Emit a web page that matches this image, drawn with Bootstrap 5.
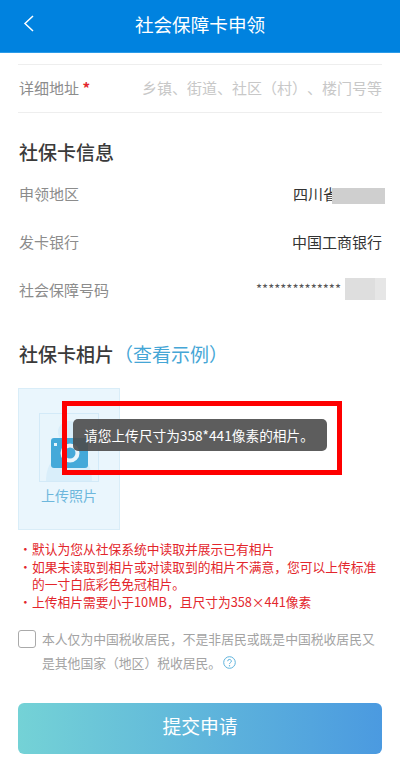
<!DOCTYPE html>
<html lang="zh-CN">
<head>
    <meta charset="UTF-8">
    <meta name="viewport" content="width=device-width, initial-scale=1.0">
    <title>社会保障卡申领</title>
    <link href="https://cdn.jsdelivr.net/npm/bootstrap@5.3.0/dist/css/bootstrap.min.css" rel="stylesheet">
    <style>
        html, body { height: 777px; overflow: hidden; }
        body { font-family: "Noto Sans CJK SC", "Liberation Sans", sans-serif; background: #fff; color: #333; position: relative; text-spacing-trim: space-all; }
        .app-head { height: 53px; background: #0082df; border-bottom: 1px solid #2b9be8; color: #fff; position: relative; }
        .app-head h1 { font-size: 18.6px; font-weight: 400; margin: 0; line-height: 47px; text-align: center; }
        .back-arrow { position: absolute; left: 23px; top: 14px; }
        .page-body { padding: 11px 18px 0; }
        .addr-row { height: 49px; border-top: 1px solid #eee; border-bottom: 1px solid #eee; font-size: 15px; }
        .field-label { color: #8c8c8c; font-size: 15px; padding-left: 1px; }
        .req-star { color: #e3262c; font-weight: 700; }
        .addr-hint { color: #c8c8c8; font-size: 15px; white-space: nowrap; }
        .sect-title { font-size: 19px; font-weight: 500; color: #3a3a3a; line-height: 26px; margin: 0; padding-left: 1px; }
        .sect-one { margin-top: 26px; margin-bottom: 18px; }
        .sect-two { margin-top: 14px; margin-bottom: 21px; }
        .sect-title span { color: #45a6d6; font-weight: 400; }
        .info-row { height: 48px; font-size: 15px; }
        .info-val { color: #333; position: relative; }
        .blur-area { position: absolute; left: 39px; top: 5px; width: 53px; height: 16px; background: #cfcfcf; }
        .blur-num { position: absolute; right: -4px; top: -1px; width: 41px; height: 22px; background: linear-gradient(90deg, #dedede 73%, #e6e6e6 73%); }
        .stars { font-size: 13px; color: #555; white-space: nowrap; }
        .photo-box { width: 102px; height: 142px; background: #eaf6fd; border: 1px solid #d9edf8; }
        .photo-inner { width: 60px; height: 69px; margin-top: 24px; background: #e8f5fc; border: 1px solid #d3eaf8; position: relative; }
        .photo-inner svg { position: absolute; left: 0; top: 0; }
        .photo-text { color: #6db7dc; font-size: 14px; margin-top: 3px; line-height: 20px; }
        .tips { color: #e3262c; font-size: 12.75px; line-height: 17.7px; margin: 10px 0 0; padding: 0; list-style: none; }
        .tips li { padding-left: 14px; position: relative; }
        .tips li::before { content: "·"; position: absolute; left: 1px; top: 0; }
        .agree-row { margin-top: 16px; color: #a3a3a3; font-size: 12.8px; line-height: 24px; }
        .check-box { width: 18px; height: 18px; flex: none; border: 1px solid #aaa; border-radius: 3px; margin-top: 3px; margin-right: -2px; }
        .help-icon { vertical-align: -1px; margin-left: 2px; }
        .submit-btn { display: block; width: 100%; height: 51px; margin-top: 28px; padding: 0 0 4px; border: 0; border-radius: 6px; color: #fff; font-size: 18.8px; background: linear-gradient(90deg, #74d2d6, #4b9ae0); }
        .red-frame { position: absolute; left: 62px; top: 401px; width: 280px; height: 74px; border: 5px solid #fe0000; }
        .toast-box { position: absolute; left: 73px; top: 419px; width: 254px; height: 32px; border-radius: 5px; background: rgba(75, 75, 75, .9); color: #fff; font-size: 13.7px; line-height: 32px; padding-left: 11px; white-space: nowrap; }
    </style>
</head>
<body>
<header class="app-head">
    <svg class="back-arrow" width="12" height="20" viewBox="0 0 12 20"><path d="M10 2 2 9.5l8 7.5" fill="none" stroke="#fff" stroke-width="1.5"/></svg>
    <h1>社会保障卡申领</h1>
</header>

<main class="page-body">
    <div class="addr-row d-flex justify-content-between align-items-center">
        <div class="field-label">详细地址 <span class="req-star">*</span></div>
        <div class="addr-hint">乡镇、街道、社区（村）、楼门号等</div>
    </div>

    <h2 class="sect-title sect-one">社保卡信息</h2>
    <div class="info-row d-flex justify-content-between">
        <div class="field-label">申领地区</div>
        <div class="info-val">四川省<span class="blur-area"></span><span class="d-inline-block" style="width:44px"></span></div>
    </div>
    <div class="info-row d-flex justify-content-between">
        <div class="field-label">发卡银行</div>
        <div class="info-val">中国工商银行</div>
    </div>
    <div class="info-row d-flex justify-content-between">
        <div class="field-label">社会保障号码</div>
        <div class="info-val stars">**************<span class="d-inline-block" style="width:41px"></span><span class="blur-num"></span></div>
    </div>

    <h2 class="sect-title sect-two">社保卡相片<span>（查看示例）</span></h2>
    <div class="photo-box d-flex flex-column align-items-center">
        <div class="photo-inner">
            <svg width="58" height="67" viewBox="0 0 58 67">
                <circle cx="29" cy="18" r="11" fill="#d9eefa"/>
                <path d="M6 67c0-18 10-28 23-28s23 10 23 28z" fill="#d9eefa"/>
                <rect x="11" y="24" width="37" height="30" rx="3" fill="#45a9d9"/>
                <circle cx="30" cy="39" r="9.5" fill="#e8f5fc"/>
                <circle cx="30" cy="39" r="5.5" fill="#45a9d9"/>
                <rect x="14" y="29" width="3" height="3" fill="#e8f5fc"/>
            </svg>
        </div>
        <div class="photo-text">上传照片</div>
    </div>

    <ul class="tips">
        <li>默认为您从社保系统中读取并展示已有相片</li>
        <li>如果未读取到相片或对读取到的相片不满意，您可以上传标准的一寸白底彩色免冠相片。</li>
        <li>上传相片需要小于10MB，且尺寸为358×441像素</li>
    </ul>

    <div class="agree-row d-flex gap-2">
        <span class="check-box"></span>
        <div>本人仅为中国税收居民，不是非居民或既是中国税收居民又是其他国家（地区）税收居民。<svg class="help-icon" width="13" height="13" viewBox="0 0 13 13"><circle cx="6.5" cy="6.5" r="5.8" fill="none" stroke="#5fb3dc"/><path d="M4.7 5.2a1.8 1.8 0 1 1 2.6 1.6c-.6.3-.8.6-.8 1.2" fill="none" stroke="#5fb3dc"/><circle cx="6.5" cy="9.8" r=".7" fill="#5fb3dc"/></svg></div>
    </div>

    <button type="button" class="btn submit-btn">提交申请</button>
</main>

<div class="red-frame"></div>
<div class="toast-box">请您上传尺寸为358*441像素的相片。</div>

<script src="https://cdn.jsdelivr.net/npm/bootstrap@5.3.0/dist/js/bootstrap.bundle.min.js"></script>
</body>
</html>
